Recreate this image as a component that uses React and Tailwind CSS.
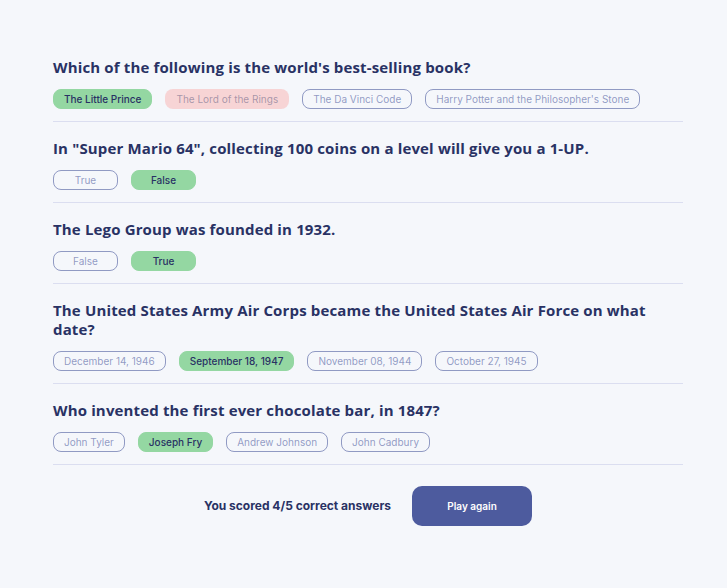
const questions = [
  {
    q: "Which of the following is the world's best-selling book?",
    answers: [
      { text: 'The Little Prince', state: 'correct' },
      { text: 'The Lord of the Rings', state: 'wrong' },
      { text: 'The Da Vinci Code', state: 'idle' },
      { text: "Harry Potter and the Philosopher's Stone", state: 'idle' },
    ],
  },
  {
    q: 'In "Super Mario 64", collecting 100 coins on a level will give you a 1-UP.',
    answers: [
      { text: 'True', state: 'idle' },
      { text: 'False', state: 'correct' },
    ],
  },
  {
    q: 'The Lego Group was founded in 1932.',
    answers: [
      { text: 'False', state: 'idle' },
      { text: 'True', state: 'correct' },
    ],
  },
  {
    q: 'The United States Army Air Corps became the United States Air Force on what date?',
    answers: [
      { text: 'December 14, 1946', state: 'idle' },
      { text: 'September 18, 1947', state: 'correct' },
      { text: 'November 08, 1944', state: 'idle' },
      { text: 'October 27, 1945', state: 'idle' },
    ],
  },
  {
    q: 'Who invented the first ever chocolate bar, in 1847?',
    answers: [
      { text: 'John Tyler', state: 'idle' },
      { text: 'Joseph Fry', state: 'correct' },
      { text: 'Andrew Johnson', state: 'idle' },
      { text: 'John Cadbury', state: 'idle' },
    ],
  },
];

const answerClass = {
  correct: 'bg-[#94d7a2] border-[#94d7a2] text-[#293264] font-medium',
  wrong: 'bg-[#f8bcbc]/60 border-transparent text-[#293264]/40',
  idle: 'bg-transparent border-[#4d5b9e]/60 text-[#4d5b9e]/60',
};

function Answer({ text, state }) {
  return (
    <span
      className={`h-5 min-w-[65px] px-[10px] flex items-center justify-center rounded-lg border text-[10px] ${answerClass[state]}`}
    >
      {text}
    </span>
  );
}

export default function App() {
  return (
    <div className="min-h-screen bg-[#f5f7fb] font-['Inter',sans-serif]">
      <div className="w-[630px] ml-[53px] pt-[58px]">
        {questions.map((item, i) => (
          <div key={i} className={`border-b border-[#dbdef0] pb-3 ${i > 0 ? 'pt-[17px]' : ''}`}>
            <h2 className="text-[15px] leading-[19px] font-bold text-[#293264] font-['Open_Sans',sans-serif] tracking-[0.15px]">
              {item.q}
            </h2>
            <div className="flex gap-[13px] mt-3">
              {item.answers.map((a) => (
                <Answer key={a.text} {...a} />
              ))}
            </div>
          </div>
        ))}
        <div className="flex items-center justify-center gap-[21px] mt-[21px]">
          <p className="text-xs font-bold text-[#293264]">You scored 4/5 correct answers</p>
          <button className="w-[120px] h-10 rounded-[10px] bg-[#4d5b9e] text-white text-[10px] font-semibold">
            Play again
          </button>
        </div>
      </div>
    </div>
  );
}
